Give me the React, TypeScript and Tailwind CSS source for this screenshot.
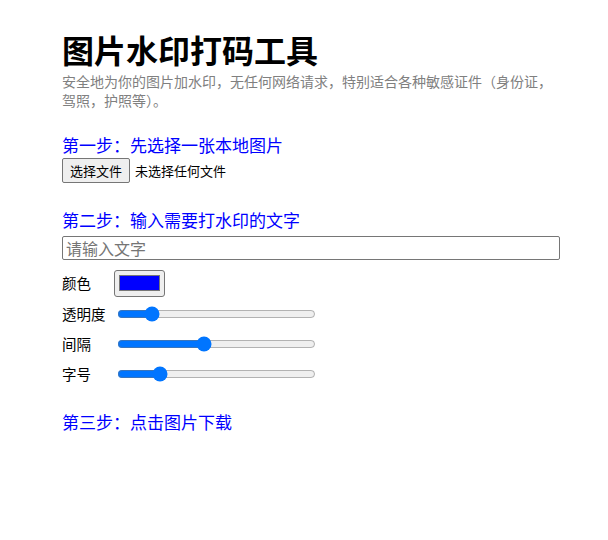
import React from "react";

export default function App() {
  const font = { fontFamily: '"Noto Sans CJK SC", "Noto Sans", sans-serif' };
  return (
    <div className="min-h-[540px] bg-white pl-[62px] pt-[27px] text-black" style={font}>
      <div className="w-[498px]">
        <h1 className="text-[32px] font-bold leading-[44px] m-0">图片水印打码工具</h1>
        <p className="text-[14px] leading-[19px] text-[#808080] mt-[1px]">
          安全地为你的图片加水印，无任何网络请求，特别适合各种敏感证件（身份证，驾照，护照等）。
        </p>
        <h2 className="mt-[24px] text-[17px] leading-[22px] text-[#0000ff]">第一步：先选择一张本地图片</h2>
        <div className="mt-[2px] flex items-center gap-[5px] text-[13px]">
          <button className="h-[25px] px-[7px] bg-[#efefef] border border-[#767676] rounded-[2px] leading-none">
            选择文件
          </button>
          <span>未选择任何文件</span>
        </div>
        <h2 className="mt-[26px] text-[17px] leading-[22px] text-[#0000ff]">第二步：输入需要打水印的文字</h2>
        <input
          type="text"
          placeholder="请输入文字"
          className="mt-[5px] block w-[498px] h-[24px] border border-[#767676] rounded-[2px] px-[3px] text-[16px] placeholder:text-[#757575]"
        />
        <div className="mt-[10px] flex flex-col gap-[5px] text-[14.5px]">
          <div className="flex items-center h-[26px]">
            <span className="w-[52px]">颜色</span>
            <div className="w-[51px] h-[27px] bg-[#efefef] border border-[#767676] rounded-[3px] flex items-center justify-center">
              <div className="w-[41px] h-[16px] bg-[#0000ff] border border-[#777777]" />
            </div>
          </div>
          <div className="flex items-center h-[25px]">
            <span className="w-[55px]">透明度</span>
            <input type="range" min={0} max={100} defaultValue={15} className="w-[199px]" />
          </div>
          <div className="flex items-center h-[25px]">
            <span className="w-[55px]">间隔</span>
            <input type="range" min={0} max={100} defaultValue={43} className="w-[199px]" />
          </div>
          <div className="flex items-center h-[25px]">
            <span className="w-[55px]">字号</span>
            <input type="range" min={0} max={100} defaultValue={19} className="w-[199px]" />
          </div>
        </div>
        <h2 className="mt-[25px] text-[17px] leading-[22px] text-[#0000ff]">第三步：点击图片下载</h2>
      </div>
    </div>
  );
}
